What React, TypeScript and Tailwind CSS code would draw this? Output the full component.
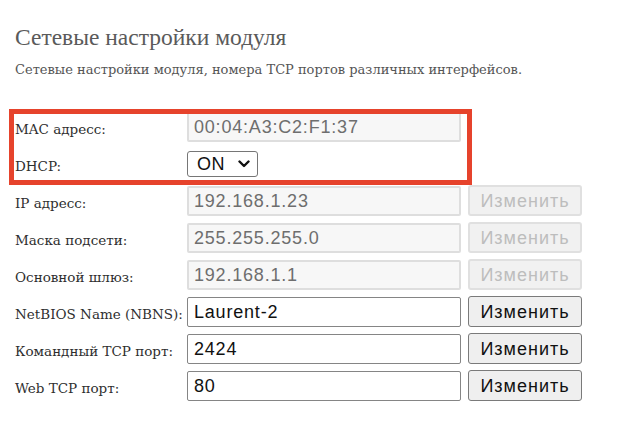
import React from "react";

const serif = { fontFamily: '"Liberation Serif", "Times New Roman", serif' };
const dserif = { fontFamily: '"DejaVu Serif", "Liberation Serif", serif' };
const sans = { fontFamily: '"Liberation Sans", Arial, sans-serif' };

type Row = {
  label: string;
  value: string;
  kind: "ro" | "rw" | "select";
  button?: "disabled" | "enabled";
};

const rows: Row[] = [
  { label: "MAC адресс:", value: "00:04:A3:C2:F1:37", kind: "ro" },
  { label: "DHCP:", value: "ON", kind: "select" },
  { label: "IP адресс:", value: "192.168.1.23", kind: "ro", button: "disabled" },
  { label: "Маска подсети:", value: "255.255.255.0", kind: "ro", button: "disabled" },
  { label: "Основной шлюз:", value: "192.168.1.1", kind: "ro", button: "disabled" },
  { label: "NetBIOS Name (NBNS):", value: "Laurent-2", kind: "rw", button: "enabled" },
  { label: "Командный TCP порт:", value: "2424", kind: "rw", button: "enabled" },
  { label: "Web TCP порт:", value: "80", kind: "rw", button: "enabled" },
];

function Field({ row }: { row: Row }) {
  if (row.kind === "select") {
    return (
      <div
        className="flex h-[26px] w-[71px] items-center justify-between rounded-[3px] border border-[#767676] bg-white pl-[9px] pr-[6px] text-[18px] leading-none tracking-[0.6px] text-[#111]"
        style={sans}
      >
        <span>{row.value}</span>
        <svg width="12" height="8" viewBox="0 0 12 8" className="mr-[1px]">
          <path d="M1.5 1.5 L6 6 L10.5 1.5" fill="none" stroke="#111" strokeWidth="2.4" strokeLinecap="round" strokeLinejoin="round" />
        </svg>
      </div>
    );
  }
  const ro = row.kind === "ro";
  return (
    <div
      className={
        ro
          ? "flex h-[30px] w-[274px] items-center rounded-[2px] border-2 border-[#dedede] bg-[#f7f7f7] pl-[5px] text-[18px] leading-none tracking-[0.8px] text-[#6e6e6e]"
          : "flex h-[30px] w-[274px] items-center rounded-[2px] border border-[#858585] bg-white pl-[6px] text-[18px] leading-none tracking-[0.8px] text-[#111]"
      }
      style={sans}
    >
      {row.value}
    </div>
  );
}

function Btn({ kind }: { kind: "disabled" | "enabled" }) {
  return (
    <div
      className={
        kind === "disabled"
          ? "flex h-[31px] w-[114px] items-center justify-center rounded-[3px] border-2 border-[#e0e0e0] bg-[#f1f1f1] text-[18px] leading-none tracking-[1px] text-[#bdbdbd]"
          : "flex h-[31px] w-[114px] items-center justify-center rounded-[3px] border border-[#7a7a7a] bg-[#efefef] text-[18px] leading-none tracking-[1px] text-[#111]"
      }
      style={sans}
    >
      Изменить
    </div>
  );
}

export default function App() {
  return (
    <div className="relative h-[428px] w-[624px] overflow-hidden bg-white">
      <div className="px-[15px] pt-[26px]">
        <h1 className="text-[23.5px] leading-none text-[#5a5a5a]" style={serif}>
          Сетевые настройки модуля
        </h1>
        <p className="mt-[13px] text-[13px] leading-none text-[#555]" style={dserif}>
          Сетевые настройки модуля, номера TCP портов различных интерфейсов.
        </p>
        <div className="mt-[36px] flex flex-col gap-[7px]">
          {rows.map((r) => (
            <div key={r.label} className="flex h-[30px] items-center">
              <div
                className="w-[172px] pt-[6px] text-[13.5px] leading-none text-[#2e2e2e]"
                style={dserif}
              >
                {r.label}
              </div>
              <Field row={r} />
              {r.button && (
                <div className="ml-[7px]">
                  <Btn kind={r.button} />
                </div>
              )}
            </div>
          ))}
        </div>
      </div>
      <div className="pointer-events-none absolute left-[9px] top-[109px] h-[76px] w-[463px] border-[5px] border-[#e6432c]" />
    </div>
  );
}
